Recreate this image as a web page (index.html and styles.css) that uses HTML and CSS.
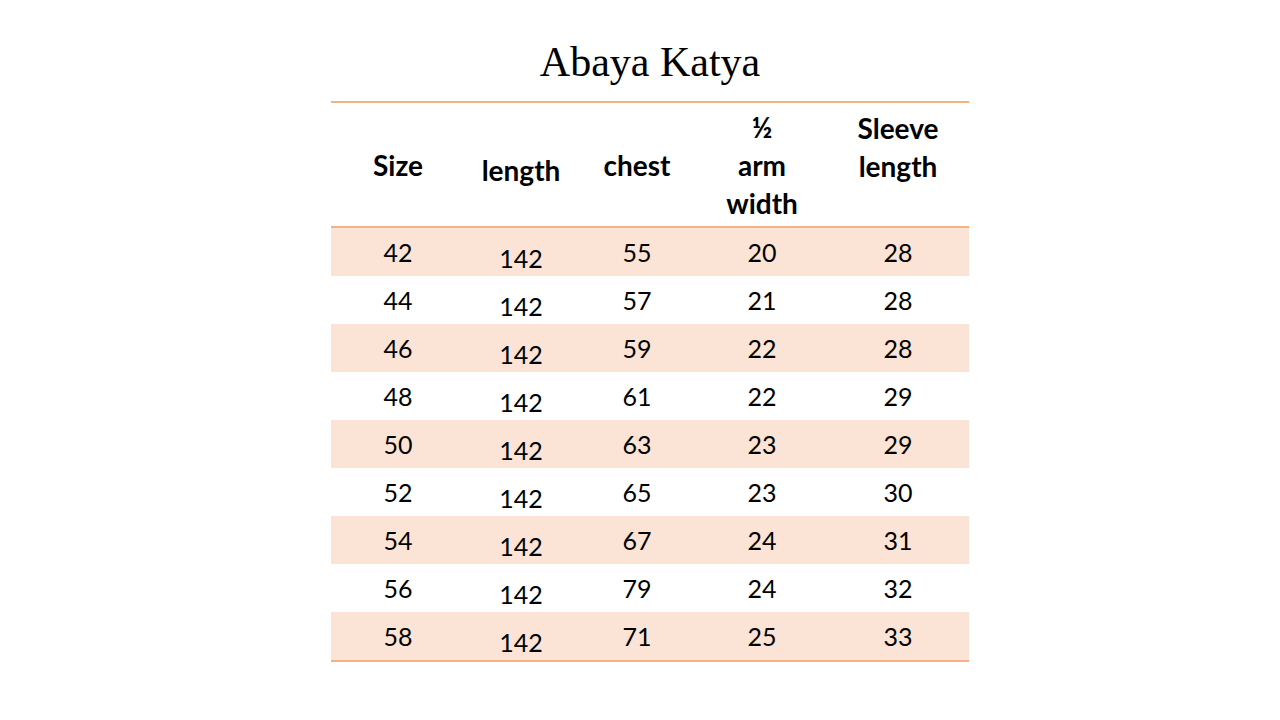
FILE: index.html
```html
<!DOCTYPE html>
<html>
<head>
<meta charset="utf-8">
<link rel="stylesheet" href="styles.css">
</head>
<body>
<main class="slide">
  <h1 class="title">Abaya Katya</h1>
  <table class="sizes">
    <thead>
      <tr>
        <th class="c-size">Size</th>
        <th class="c-len">length</th>
        <th class="c-chest">chest</th>
        <th class="c-arm">½<br>arm<br>width</th>
        <th class="c-sleeve">Sleeve<br>length</th>
      </tr>
    </thead>
    <tbody>
      <tr class="shade"><td>42</td><td class="c-len">142</td><td>55</td><td>20</td><td>28</td></tr>
      <tr><td>44</td><td class="c-len">142</td><td>57</td><td>21</td><td>28</td></tr>
      <tr class="shade"><td>46</td><td class="c-len">142</td><td>59</td><td>22</td><td>28</td></tr>
      <tr><td>48</td><td class="c-len">142</td><td>61</td><td>22</td><td>29</td></tr>
      <tr class="shade"><td>50</td><td class="c-len">142</td><td>63</td><td>23</td><td>29</td></tr>
      <tr><td>52</td><td class="c-len">142</td><td>65</td><td>23</td><td>30</td></tr>
      <tr class="shade"><td>54</td><td class="c-len">142</td><td>67</td><td>24</td><td>31</td></tr>
      <tr><td>56</td><td class="c-len">142</td><td>79</td><td>24</td><td>32</td></tr>
      <tr class="shade"><td>58</td><td class="c-len">142</td><td>71</td><td>25</td><td>33</td></tr>
    </tbody>
  </table>
</main>
</body>
</html>
```
FILE: styles.css
```css
html, body {
  margin: 0;
  padding: 0;
  background: #ffffff;
}

.slide {
  width: 1280px;
  height: 720px;
  box-sizing: border-box;
  padding-left: 20px;
  display: flex;
  flex-direction: column;
  align-items: center;
}

.title {
  flex-shrink: 0;
  margin: 0;
  height: 101px;
  box-sizing: border-box;
  padding-top: 38px;
  font-family: "Liberation Serif", "DejaVu Serif", serif;
  font-weight: normal;
  font-size: 42px;
  line-height: 48px;
  color: #000;
}

.sizes {
  flex-shrink: 0;
  width: 638px;
  border-collapse: collapse;
  font-family: Lato, "Open Sans", sans-serif;
  font-size: 25px;
  color: #000;
  table-layout: fixed;
}

.sizes thead tr {
  height: 125px;
  border-top: 2px solid #f4b183;
  border-bottom: 2px solid #f4b183;
}

.sizes th {
  font-size: 28px;
  font-weight: bold;
  line-height: 38px;
  vertical-align: middle;
  text-align: center;
  padding: 0;
}

.sizes td {
  height: 48px;
  padding: 0;
  text-align: center;
  vertical-align: middle;
  line-height: 48px;
}

.sizes tbody tr:last-child {
  border-bottom: 2px solid #f4b183;
}

.sizes .shade {
  background: #fbe4d5;
}

.sizes .c-size { width: 134px; }
.sizes th.c-len { width: 112px; padding-top: 10px; }
.sizes td.c-len { height: 36px; padding-top: 12px; line-height: 36px; }
.sizes .c-chest { width: 120px; }
.sizes .c-arm { width: 130px; }
.sizes .c-sleeve { width: 142px; }
.sizes th.c-sleeve { vertical-align: top; padding-top: 6px; }
```
